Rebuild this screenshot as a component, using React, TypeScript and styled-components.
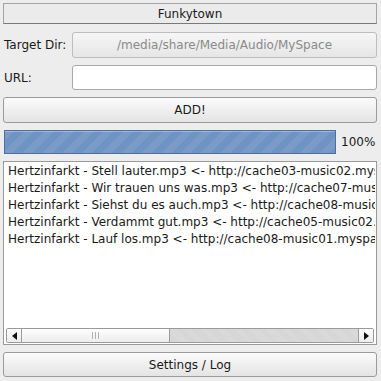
import React from "react"
import styled, { createGlobalStyle } from "styled-components"

const Global = createGlobalStyle`
    html, body {
        margin: 0;
        padding: 0;
        background: #ededed;
    }
    body {
        font-family: "DejaVu Sans", "Liberation Sans", sans-serif;
        font-size: 12px;
        color: #1a1a1a;
    }
`

const Window = styled.div`
    width: 374px;
    height: 381px;
    padding: 3px 4px 0 3px;
    display: flex;
    flex-direction: column;
    row-gap: 7px;
`

const TitleBar = styled.div`
    height: 19px;
    border: 1px solid #a4a4a4;
    border-bottom-color: #7a7a7a;
    background: #ebebeb;
    display: flex;
    align-items: center;
    justify-content: center;
    font-size: 12px;
    margin-bottom: 1px;
`

const FormRow = styled.div<{ $h: number }>`
    display: flex;
    align-items: center;
    height: ${p => p.$h}px;
`

const Label = styled.span`
    width: 68px;
    padding-left: 1px;
    flex-shrink: 0;
`

const DirButton = styled.div`
    flex: 1;
    height: 100%;
    box-sizing: border-box;
    border: 1px solid #bdbdbd;
    border-radius: 3px;
    background: linear-gradient(#f6f6f6, #e6e6e6);
    color: #8a8a8a;
    display: flex;
    align-items: center;
    justify-content: center;
`

const Input = styled.div`
    flex: 1;
    height: 100%;
    box-sizing: border-box;
    border: 1px solid #a8a8a8;
    border-radius: 3px;
    background: #ffffff;
`

const Button = styled.div<{ $h: number }>`
    height: ${p => p.$h}px;
    flex-shrink: 0;
    box-sizing: border-box;
    border: 1px solid #9b9b9b;
    border-radius: 3px;
    background: linear-gradient(#fbfbfb, #e4e4e4);
    display: flex;
    align-items: center;
    justify-content: center;
`

const ProgressRow = styled.div`
    display: flex;
    align-items: center;
    height: 24px;
    column-gap: 5px;
    padding-left: 1px;
`

const Progress = styled.div`
    width: 332px;
    height: 24px;
    box-sizing: border-box;
    border: 1px solid #4d6f9c;
    background-color: #6f93c3;
    background-image: repeating-linear-gradient(
        135deg,
        rgba(255, 255, 255, 0.08) 0px,
        rgba(255, 255, 255, 0.08) 7px,
        rgba(255, 255, 255, 0) 7px,
        rgba(255, 255, 255, 0) 14px
    );
    box-shadow: inset 0 1px 0 rgba(255, 255, 255, 0.3);
`

const Percent = styled.span`
    font-size: 12px;
`

const ListBox = styled.div`
    height: 184px;
    flex-shrink: 0;
    box-sizing: border-box;
    border: 1px solid #9a9a9a;
    background: #ffffff;
    display: flex;
    flex-direction: column;
    padding: 1px;
`

const Lines = styled.div`
    flex: 1;
    overflow: hidden;
    padding: 0 0 0 3px;
    white-space: nowrap;
`

const Line = styled.div`
    height: 17px;
    line-height: 17px;
    font-size: 12px;
    color: #1a1a1a;
`

const HScroll = styled.div`
    height: 15px;
    margin: 0 1px 0 1px;
    display: flex;
    border: 1px solid #9a9a9a;
    border-radius: 2px;
    background: repeating-linear-gradient(45deg, #d4d4d4 0 1px, #dcdcdc 1px 2px);
    box-sizing: border-box;
`

const Arrow = styled.div<{ $side: "left" | "right" }>`
    width: 15px;
    box-sizing: border-box;
    background: linear-gradient(#fdfdfd, #ececec);
    display: flex;
    align-items: center;
    justify-content: center;
    border-${p => (p.$side === "left" ? "right" : "left")}: 1px solid #9a9a9a;
`

const Thumb = styled.div`
    width: 148px;
    box-sizing: border-box;
    border-right: 1px solid #9a9a9a;
    background: linear-gradient(#fdfdfd, #ededed);
    display: flex;
    align-items: center;
    justify-content: center;
    column-gap: 2px;
`

const Grip = styled.span`
    width: 1px;
    height: 7px;
    background: #b0b0b0;
`

const Trough = styled.div`
    flex: 1;
`

const files = [
    "Hertzinfarkt - Stell lauter.mp3 <- http://cache03-music02.myspace.com",
    "Hertzinfarkt - Wir trauen uns was.mp3 <- http://cache07-music01.myspace.com",
    "Hertzinfarkt - Siehst du es auch.mp3 <- http://cache08-music02.myspace.com",
    "Hertzinfarkt - Verdammt gut.mp3 <- http://cache05-music02.myspace.com",
    "Hertzinfarkt - Lauf los.mp3 <- http://cache08-music01.myspace.com",
]

const App: React.FC = () => {
    return (
        <>
            <Global />
            <Window>
                <TitleBar>Funkytown</TitleBar>
                <FormRow $h={26}>
                    <Label>Target Dir:</Label>
                    <DirButton>/media/share/Media/Audio/MySpace</DirButton>
                </FormRow>
                <FormRow $h={25}>
                    <Label>URL:</Label>
                    <Input />
                </FormRow>
                <Button $h={26}>ADD!</Button>
                <ProgressRow>
                    <Progress />
                    <Percent>100%</Percent>
                </ProgressRow>
                <ListBox>
                    <Lines>
                        {files.map((f) => (
                            <Line key={f}>{f}</Line>
                        ))}
                    </Lines>
                    <HScroll>
                        <Arrow $side="left">
                            <svg width="5" height="8" viewBox="0 0 5 8"><path d="M5 0 L0 4 L5 8 Z" fill="#111" /></svg>
                        </Arrow>
                        <Thumb>
                            <Grip />
                            <Grip />
                            <Grip />
                        </Thumb>
                        <Trough />
                        <Arrow $side="right">
                            <svg width="5" height="8" viewBox="0 0 5 8"><path d="M0 0 L5 4 L0 8 Z" fill="#111" /></svg>
                        </Arrow>
                    </HScroll>
                </ListBox>
                <Button $h={25}>Settings / Log</Button>
            </Window>
        </>
    )
}

export default App
